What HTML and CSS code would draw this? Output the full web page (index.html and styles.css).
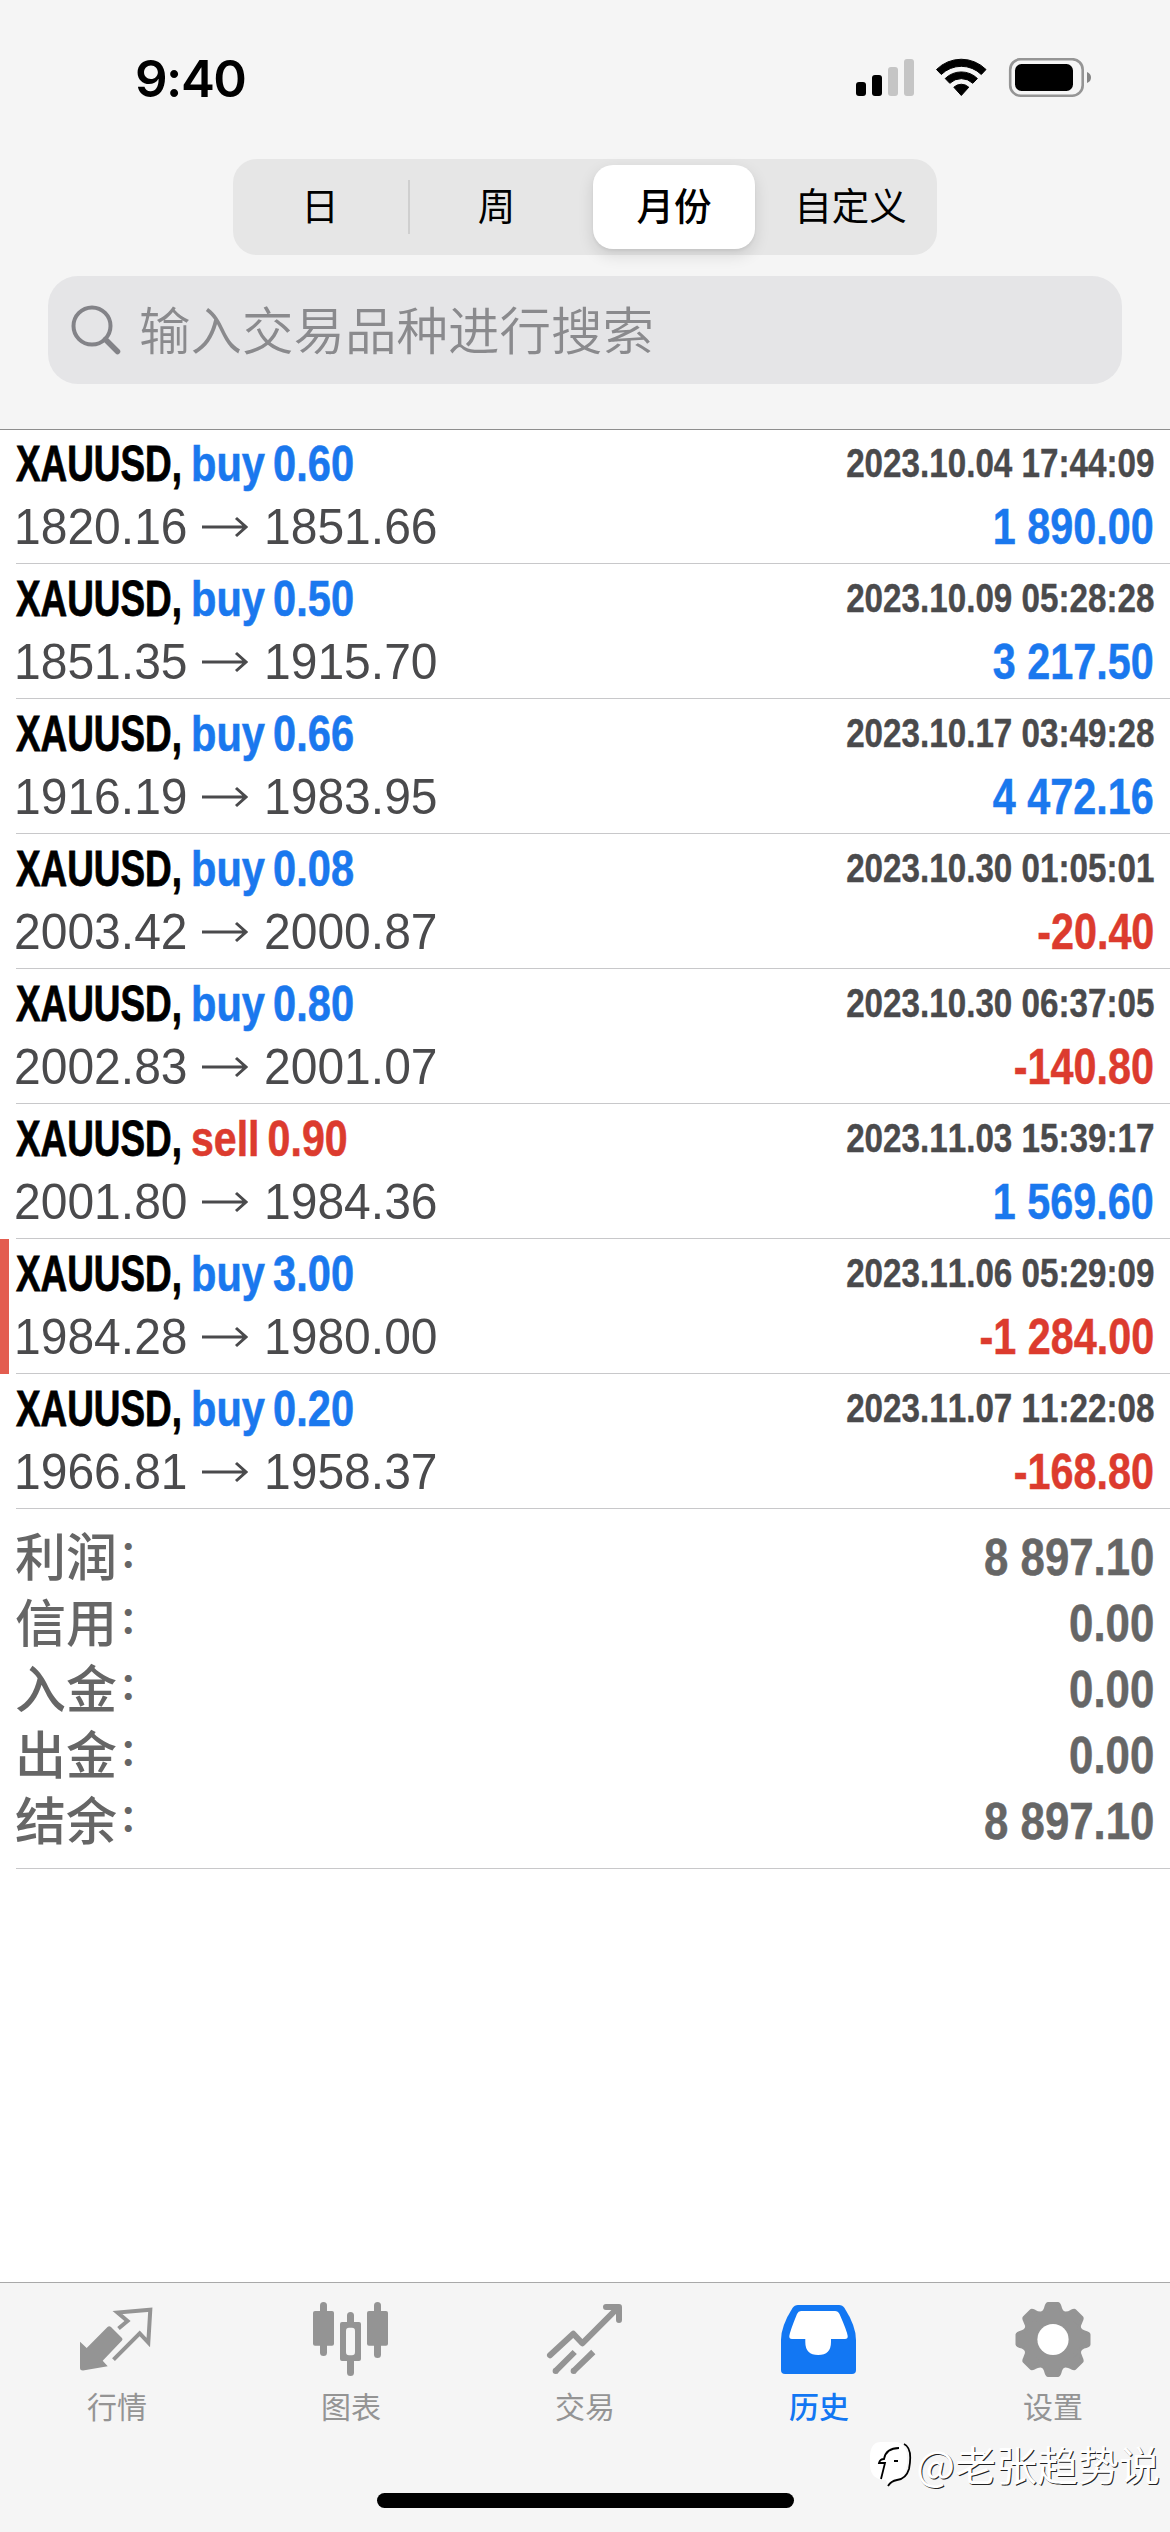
FILE: index.html
```html
<!DOCTYPE html>
<html lang="zh-CN">
<head>
<meta charset="utf-8">
<title>历史</title>
<link rel="stylesheet" href="styles.css">
</head>
<body>
<div class="screen">
  <header class="header">
    <div class="status">
      <span class="time">9:40</span>
      <svg class="status-icons" width="236" height="40" viewBox="0 0 236 40">
        <rect x="0" y="24" width="10" height="14" rx="3"/>
        <rect x="16" y="17" width="10" height="21" rx="3"/>
        <rect x="32" y="9" width="10" height="29" rx="3" fill="#c5c5c5"/>
        <rect x="48" y="1" width="10" height="37" rx="3" fill="#c5c5c5"/>
        <path d="M80.500 11.500a35 35 0 0 1 49.500 0L125.300 16.500a28.500 28.500 0 0 0-40 0zM89.200 20.500a23 23 0 0 1 32.200 0L116.800 25.300a16.500 16.500 0 0 0-23 0zM97.800 29.200a11 11 0 0 1 15 0L105.300 37.500z" stroke="#000" stroke-width="1" stroke-linejoin="round"/>
        <rect x="154.200" y="1.200" width="72.500" height="36.500" rx="10.500" fill="none" stroke="#959595" stroke-width="2.600"/>
        <rect x="159" y="6" width="58" height="27" rx="6.500"/>
        <path d="M231 14q4 1.500 4 5.500t-4 5.500z" fill="#858585"/>
      </svg>
    </div>
    <div class="segments">
      <span class="segment">日</span>
      <span class="segment segment-divided">周</span>
      <span class="segment segment-active">月份</span>
      <span class="segment segment-last">自定义</span>
    </div>
    <div class="search">
      <svg width="52" height="58" viewBox="0 0 52 58" fill="none" stroke="#838388" stroke-linecap="round">
        <circle cx="21" cy="25" r="18.500" stroke-width="4"/>
        <path d="M34.500 38.500L46.500 50.500" stroke-width="5.500"/>
      </svg>
      <span class="placeholder">输入交易品种进行搜索</span>
    </div>
  </header>

  <main class="content">
    <ul class="deals">
      <li class="deal"><div class="line"><span class="symbol">XAUUSD,</span><span class="side buy">buy 0.60</span><span class="date">2023.10.04 17:44:09</span></div><div class="line"><span class="price">1820.16</span><svg class="arrow" viewBox="0 0 46 22"><path d="M0 11H44M34 2L44 11L34 20"/></svg><span class="price">1851.66</span><span class="profit gain">1 890.00</span></div></li>
      <li class="deal"><div class="line"><span class="symbol">XAUUSD,</span><span class="side buy">buy 0.50</span><span class="date">2023.10.09 05:28:28</span></div><div class="line"><span class="price">1851.35</span><svg class="arrow" viewBox="0 0 46 22"><path d="M0 11H44M34 2L44 11L34 20"/></svg><span class="price">1915.70</span><span class="profit gain">3 217.50</span></div></li>
      <li class="deal"><div class="line"><span class="symbol">XAUUSD,</span><span class="side buy">buy 0.66</span><span class="date">2023.10.17 03:49:28</span></div><div class="line"><span class="price">1916.19</span><svg class="arrow" viewBox="0 0 46 22"><path d="M0 11H44M34 2L44 11L34 20"/></svg><span class="price">1983.95</span><span class="profit gain">4 472.16</span></div></li>
      <li class="deal"><div class="line"><span class="symbol">XAUUSD,</span><span class="side buy">buy 0.08</span><span class="date">2023.10.30 01:05:01</span></div><div class="line"><span class="price">2003.42</span><svg class="arrow" viewBox="0 0 46 22"><path d="M0 11H44M34 2L44 11L34 20"/></svg><span class="price">2000.87</span><span class="profit loss">-20.40</span></div></li>
      <li class="deal"><div class="line"><span class="symbol">XAUUSD,</span><span class="side buy">buy 0.80</span><span class="date">2023.10.30 06:37:05</span></div><div class="line"><span class="price">2002.83</span><svg class="arrow" viewBox="0 0 46 22"><path d="M0 11H44M34 2L44 11L34 20"/></svg><span class="price">2001.07</span><span class="profit loss">-140.80</span></div></li>
      <li class="deal"><div class="line"><span class="symbol">XAUUSD,</span><span class="side sell">sell 0.90</span><span class="date">2023.11.03 15:39:17</span></div><div class="line"><span class="price">2001.80</span><svg class="arrow" viewBox="0 0 46 22"><path d="M0 11H44M34 2L44 11L34 20"/></svg><span class="price">1984.36</span><span class="profit gain">1 569.60</span></div></li>
      <li class="deal marked"><div class="line"><span class="symbol">XAUUSD,</span><span class="side buy">buy 3.00</span><span class="date">2023.11.06 05:29:09</span></div><div class="line"><span class="price">1984.28</span><svg class="arrow" viewBox="0 0 46 22"><path d="M0 11H44M34 2L44 11L34 20"/></svg><span class="price">1980.00</span><span class="profit loss">-1 284.00</span></div></li>
      <li class="deal"><div class="line"><span class="symbol">XAUUSD,</span><span class="side buy">buy 0.20</span><span class="date">2023.11.07 11:22:08</span></div><div class="line"><span class="price">1966.81</span><svg class="arrow" viewBox="0 0 46 22"><path d="M0 11H44M34 2L44 11L34 20"/></svg><span class="price">1958.37</span><span class="profit loss">-168.80</span></div></li>
    </ul>
    <div class="summary">
      <div class="total"><span class="label">利润<span class="colon">：</span></span><span class="amount">8 897.10</span></div>
      <div class="total"><span class="label">信用<span class="colon">：</span></span><span class="amount">0.00</span></div>
      <div class="total"><span class="label">入金<span class="colon">：</span></span><span class="amount">0.00</span></div>
      <div class="total"><span class="label">出金<span class="colon">：</span></span><span class="amount">0.00</span></div>
      <div class="total"><span class="label">结余<span class="colon">：</span></span><span class="amount">8 897.10</span></div>
    </div>
  </main>

  <footer class="footer">
    <nav class="tabs">
      <div class="tab">
        <svg class="tab-icon" viewBox="0 0 84 84"><path d="M43.500 30.500L52.500 23L42.500 14.500L75.300 11.700L73.300 44.500L64.700 35.300L38.500 61.700" fill="none" stroke="currentColor" stroke-width="4"/><path d="M5 43.700L11.700 50L32.500 29Q34.300 27.500 36 29L47 40Q48 41.300 47 42.500L27.700 62.700L32.700 68.300L8 72.500Q5 72.500 5 70z" fill="currentColor"/></svg>
        <span>行情</span>
      </div>
      <div class="tab">
        <svg class="tab-icon" viewBox="0 0 84 84"><g fill="currentColor"><rect x="4" y="13" width="21" height="34.700" rx="2"/><rect x="11" y="4" width="7" height="54" rx="3.500"/><rect x="58" y="13" width="21" height="34.700" rx="2"/><rect x="65" y="4" width="7" height="56" rx="3.500"/><path fill-rule="evenodd" d="M33 24h17q2 0 2 2v35q0 2-2 2h-17q-2 0-2-2v-35q0-2 2-2zM37 33v21q0 3.300 3 3.300h3q3 0 3-3.300v-21q0-3.300-3-3.300h-3q-3 0-3 3.300z"/><path d="M38 25v-7.500a3.500 3.500 0 0 1 7 0v7.500zM38 62v12.500a3.500 3.500 0 0 0 7 0v-12.500z"/></g></svg>
        <span>图表</span>
      </div>
      <div class="tab">
        <svg class="tab-icon" viewBox="0 0 84 84" fill="none" stroke="currentColor" stroke-width="6"><path d="M7 57.300L30.300 35.700L39.300 45.300L75.500 9.200M63 9H76V22" stroke-linecap="round" stroke-linejoin="round"/><path d="M31.700 54L12 73.700M50.300 54L30 73.700"/><g fill="currentColor" stroke="none"><circle cx="12.600" cy="73" r="3"/><circle cx="30.600" cy="73" r="3"/></g></svg>
        <span>交易</span>
      </div>
      <div class="tab tab-active">
        <svg class="tab-icon" viewBox="0 0 84 84"><path d="M21 7H62Q65.500 7 67.500 10Q79 28 79 42V72Q79 76 75 76H8Q4 76 4 72V42Q4 28 15.500 10Q17.500 7 21 7z" fill="currentColor"/><path d="M24 13H58Q61 13 62.500 16Q70 33 70.700 38Q71 41 68 41H54V44Q54 57 41.200 57Q28.300 57 28.300 44V41H15Q12 41 12.300 38Q13 33 20 16Q21.300 13 24 13z" fill="#fff"/></svg>
        <span>历史</span>
      </div>
      <div class="tab">
        <svg class="tab-icon" viewBox="-42 -41.500 84 84" fill="currentColor" stroke="currentColor" stroke-width="3" stroke-linejoin="round"><circle r="28"/><g id="teeth"><path id="tooth" d="M-5-36H5Q6-36 7-33Q8-28 12-26H-12Q-8-28-7-33Q-6-36-5-36z"/><use href="#tooth" transform="rotate(45)"/><use href="#tooth" transform="rotate(90)"/><use href="#tooth" transform="rotate(135)"/></g><use href="#teeth" transform="rotate(180)"/><circle r="15.600" fill="#fff" stroke="none"/></svg>
        <span>设置</span>
      </div>
    </nav>
    <div class="home-indicator"></div>
  </footer>

  <div class="watermark">
    <svg width="46" height="50" viewBox="0 0 46 50" fill="none"><path d="M14 4H30Q40 6 40 20Q41 36 33 41Q25 42 21 47L19 42Q4 42 3 28V17Q4 4 14 4z" fill="#fff"/><path d="M37 6Q46 10 42 31Q39 41 30 42Q24 43 21 48M14 41L18 25H12Q13 21 17 21Q19 10 32 10M27 23H31" stroke="#000" stroke-width="1.800"/></svg>
    <span>@老张趋势说</span>
  </div>
</div>
</body>
</html>
```
FILE: styles.css
```css
* { box-sizing: border-box; }

body {
  margin: 0;
  background: #fff;
  font-family: "Liberation Sans", "Noto Sans CJK SC", sans-serif;
  font-kerning: none;
}

.screen {
  position: relative;
  display: flex;
  flex-direction: column;
  width: 1170px;
  height: 2532px;
  overflow: hidden;
}

/* Header */
.header {
  display: flex;
  flex-direction: column;
  height: 430px;
  background: #f5f5f5;
  border-bottom: 1px solid #8e8e8e;
}

.status {
  display: flex;
  justify-content: space-between;
  align-items: flex-start;
  height: 159px;
  padding: 58px 78px 0 135px;
}

.time {
  font: 600 51px/42px Inter, sans-serif;
  letter-spacing: -1.500px;
}

.segments {
  display: flex;
  align-items: center;
  align-self: center;
  width: 704px;
  height: 96px;
  padding: 6px 0 6px 6px;
  border-radius: 24px;
  background: #e6e6e6;
  font: 400 37.500px/78px "Noto Sans CJK SC", sans-serif;
}

.segment {
  flex: none;
  width: 169px;
  height: 84px;
  padding-right: 7px;
  text-align: center;
}

.segment-divided {
  width: 185px;
  height: 54px;
  padding-right: 10px;
  border-left: 2px solid #cfcfcf;
  line-height: 48px;
}

.segment-active {
  width: 162px;
  padding: 0;
  border-radius: 20px;
  background: #fff;
  box-shadow: 0 6px 16px rgba(0, 0, 0, .12), 0 2px 3px rgba(0, 0, 0, .05);
  font-weight: 500;
}

.segment-last {
  width: 182px;
  padding: 0 0 0 9px;
}

.search {
  display: flex;
  align-items: center;
  gap: 16px;
  height: 108px;
  margin: 21px 48px 0;
  padding-left: 23px;
  border-radius: 30px;
  background: #e5e5e7;
}

.placeholder {
  height: 108px;
  color: #8a8a8d;
  font: 350 51.500px/104px "Noto Sans CJK SC", sans-serif;
}

/* Deals */
.content { flex: 1; }

.deals {
  margin: -1px 0 0;
  padding: 0;
  list-style: none;
}

.deal {
  height: 135px;
  padding: 3px 16px 0 0;
  margin-left: 16px;
  border-bottom: 1px solid #c8c8ca;
}

.marked {
  margin-left: 0;
  padding-left: 7px;
  border-left: 9px solid #e35d50;
  border-bottom: 0;
  background: linear-gradient(#c8c8ca, #c8c8ca) 7px 100% / 100% 1px no-repeat;
}

.line {
  display: flex;
  align-items: center;
  height: 63px;
  line-height: 63px;
  white-space: nowrap;
}

.symbol, .side {
  font-size: 49.500px;
  font-weight: 700;
  transform-origin: left;
}

.symbol {
  width: 174.500px;
  transform: scaleX(.745);
  -webkit-text-stroke: .8px;
}

.side {
  transform: scaleX(.84);
  word-spacing: -4px;
  -webkit-text-stroke: .6px;
}

.buy, .gain { color: #1a78ee; }
.sell, .loss { color: #dc3b2e; }

.sell { transform: scaleX(.83); }

.date {
  margin-left: auto;
  color: #4a4a4c;
  font-size: 40px;
  font-weight: 700;
  transform: scaleX(.83);
  transform-origin: right;
  -webkit-text-stroke: .4px;
}

.price {
  width: 170px;
  margin-left: -2px;
  color: #4a4a4c;
  font-size: 49.500px;
  transform: scaleX(.97);
  transform-origin: left;
}

.arrow {
  width: 46px;
  height: 22px;
  margin: 0 18px;
  fill: none;
  stroke: #4a4a4c;
  stroke-width: 3;
}

.profit {
  margin-left: auto;
  font-size: 49.500px;
  font-weight: 700;
  transform: scaleX(.835);
  transform-origin: right;
  -webkit-text-stroke: .5px;
}

/* Summary */
.summary {
  margin-left: 16px;
  padding: 15px 16px 14px 0;
  border-bottom: 1px solid #c8c8ca;
}

.total {
  display: flex;
  justify-content: space-between;
  height: 66px;
  color: #666;
  line-height: 66px;
}

.label {
  height: 66px;
  margin-left: -1px;
  font: 500 51px/60px "Noto Sans CJK SC", sans-serif;
}

.colon {
  margin-left: 2px;
  font-size: 37px;
  font-weight: 700;
  line-height: 1;
  vertical-align: 8px;
}

.amount {
  font-size: 51.500px;
  font-weight: 700;
  transform: scaleX(.85);
  transform-origin: right;
  -webkit-text-stroke: .5px;
}

/* Tab bar */
.footer {
  display: flex;
  flex-direction: column;
  justify-content: space-between;
  align-items: center;
  height: 250px;
  padding-bottom: 24px;
  border-top: 1px solid #a9a9a9;
  background: #f5f5f5;
}

.tabs {
  display: grid;
  grid-template-columns: repeat(5, 1fr);
  width: 100%;
}

.tab {
  display: flex;
  flex-direction: column;
  align-items: center;
  padding-top: 15px;
  color: #949494;
  font: 400 30px/44px "Noto Sans CJK SC", sans-serif;
}

.tab span { margin-top: 1px; }

.tab-active { color: #1277f3; }

.tab-active span { font-weight: 500; }

.tab-icon {
  width: 84px;
  height: 84px;
}

.home-indicator {
  width: 417px;
  height: 15px;
  border-radius: 8px;
  background: #000;
}

.watermark {
  position: absolute;
  right: 10px;
  bottom: 44px;
  display: flex;
  align-items: center;
  gap: 3px;
  color: #fff;
  font: 400 41px/50px "Noto Sans CJK SC", sans-serif;
  text-shadow: 1px 1px 0 #222;
}
```
